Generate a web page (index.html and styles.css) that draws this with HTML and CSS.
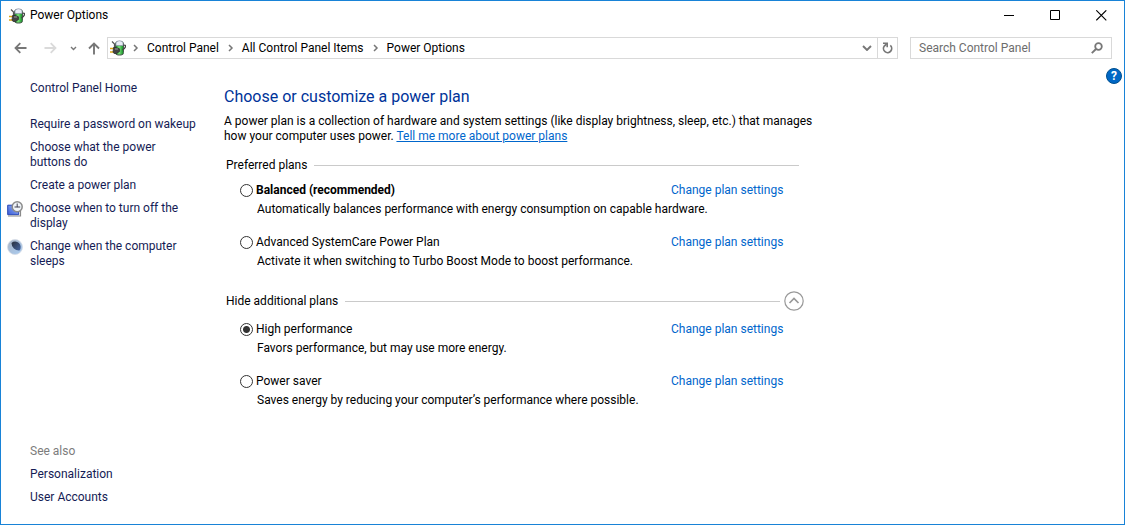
FILE: index.html
```html
<!DOCTYPE html>
<html lang="en">
<head>
<meta charset="utf-8">
<title>Power Options</title>
<meta name="viewport" content="width=device-width, initial-scale=1">
<link rel="stylesheet" href="styles.css">
</head>
<body>
<svg class="defs" aria-hidden="true">
  <defs>
    <linearGradient id="cell" x1="0" x2="1" y1="0" y2="0"><stop offset="0" stop-color="#0b7a1c"/><stop offset=".45" stop-color="#7ee07a"/><stop offset="1" stop-color="#0a8a20"/></linearGradient>
    <linearGradient id="screen" x1="0" x2="1" y1="1" y2="0"><stop offset="0" stop-color="#3a5cd8"/><stop offset="1" stop-color="#9db9f6"/></linearGradient>
    <linearGradient id="sky" x1="0" x2="1" y1="0" y2="1"><stop offset="0" stop-color="#a9b3c4"/><stop offset="1" stop-color="#a9cdf3"/></linearGradient>
    <linearGradient id="night" x1="0" x2="1" y1="0" y2="1"><stop offset="0" stop-color="#2a303c"/><stop offset="1" stop-color="#4667a5"/></linearGradient>
    <symbol id="power" viewBox="0 0 16 16">
      <path d="M2 1.500 4.500 4v4" fill="none" stroke="#555" stroke-width="1.200"/>
      <rect x="5.500" y="1.500" width="8" height="13.500" rx="2.500" fill="url(#cell)" stroke="#4c5a50"/>
      <path d="M6 5.500V3q0-2 3.500-2.300Q13 1 13 3v2.500z" fill="#e9edf6" stroke="#8a92a6" stroke-width=".7"/>
      <path d="M13.500 5.500q2.300-1 2 1t-3.200 3.500" fill="none" stroke="#444" stroke-width="1.300"/>
      <path d="M0 8.500h4M0 12h4" stroke="#d9a514" stroke-width="1.600"/>
      <path d="M3.500 7.500h2.500l3.500 1.300v2.700l-3 2H4L3 12z" fill="#444" stroke="#222" stroke-width=".6"/>
      <path d="M5 9h3" stroke="#999"/>
    </symbol>
    <symbol id="crumb" viewBox="0 0 6 8"><path d="M1 1l3 3-3 3" fill="none" stroke="#777" stroke-width="1.500"/></symbol>
  </defs>
</svg>
<div class="window">
  <header class="titlebar">
    <svg class="icon16"><use href="#power"/></svg>
    <h1 class="title">Power Options</h1>
    <div class="captions">
      <button class="caption" aria-label="Minimize"><svg viewBox="0 0 11 11"><path d="M0 5.500h10" stroke="#000"/></svg></button>
      <button class="caption" aria-label="Maximize"><svg viewBox="0 0 11 11"><path d="M.5.5h9v9h-9z" fill="none" stroke="#000"/></svg></button>
      <button class="caption" aria-label="Close"><svg viewBox="0 0 11 11"><path d="M.3.3l10 10M10.300.3l-10 10" stroke="#000" stroke-width="1.100"/></svg></button>
    </div>
  </header>
  <div class="toolbar">
    <div class="history">
      <button class="tool" aria-label="Back"><svg class="arrow" viewBox="0 0 13 12"><path d="M12.500 6H1.500M6.300 1.200 1.500 6l4.800 4.800" fill="none" stroke="#777" stroke-width="1.800"/></svg></button>
      <button class="tool" aria-label="Forward" disabled><svg class="arrow" viewBox="0 0 13 12"><path d="M.5 6h11M6.700 1.200 11.500 6l-4.800 4.800" fill="none" stroke="#dadada" stroke-width="1.800"/></svg></button>
      <button class="tool tool-small" aria-label="Recent locations"><svg class="tiny" viewBox="0 0 7 5"><path d="M1 1l2.500 2.500L6 1" fill="none" stroke="#777" stroke-width="1.400"/></svg></button>
      <button class="tool tool-up" aria-label="Up"><svg class="arrow-up" viewBox="0 0 12 13"><path d="M6 12.500V1.500M1 6.500l5-5 5 5" fill="none" stroke="#777" stroke-width="1.900"/></svg></button>
    </div>
    <nav class="address" aria-label="Address">
      <svg class="icon16"><use href="#power"/></svg>
      <ol class="crumbs">
        <li><svg class="crumb"><use href="#crumb"/></svg><a href="#">Control Panel</a></li>
        <li><svg class="crumb"><use href="#crumb"/></svg><a href="#">All Control Panel Items</a></li>
        <li><svg class="crumb"><use href="#crumb"/></svg><a href="#">Power Options</a></li>
      </ol>
      <button class="address-button" aria-label="Previous locations"><svg class="drop" viewBox="0 0 10 6"><path d="M1 1l4 4 4-4" fill="none" stroke="#777" stroke-width="1.900"/></svg></button>
      <button class="address-button refresh" aria-label="Refresh"><svg class="reload" viewBox="0 0 11 12"><path d="M8.300 3.400A4.100 4.100 0 1 1 2.300 4L4.600 2" fill="none" stroke="#777" stroke-width="1.700"/><path d="M1 1.300H5.200V5.300" fill="none" stroke="#777" stroke-width="1.600"/></svg></button>
    </nav>
    <form class="search">
      <input type="search" aria-label="Search Control Panel" placeholder="Search Control Panel">
      <button class="search-button" aria-label="Search" type="button"><svg viewBox="0 0 12 12"><circle cx="7.500" cy="4.500" r="3.300" fill="none" stroke="#777" stroke-width="1.800"/><path d="M5 7 .8 11.200" stroke="#777" stroke-width="1.900"/></svg></button>
    </form>
  </div>
  <div class="body">
    <aside class="sidebar">
      <a class="home" href="#">Control Panel Home</a>
      <ul class="tasks">
        <li><a href="#">Require a password on wakeup</a></li>
        <li><a href="#">Choose what the power buttons do</a></li>
        <li><a href="#">Create a power plan</a></li>
        <li>
          <svg class="icon16" viewBox="0 0 16 16"><path d="M.7 4.200h11v9.500H.7z" fill="url(#screen)" stroke="#2745b5"/><path d="M1 15h12.500V10" fill="none" stroke="#8a8a8a" stroke-width="1.200"/><circle cx="10.200" cy="5.800" r="5" fill="#f0f4f8" stroke="#8b8b8b" stroke-width="1.500"/><path d="M10.200 2.500v3.500h3M7.500 6h3" fill="none" stroke="#445"/></svg>
          <a href="#">Choose when to turn off the display</a>
        </li>
        <li>
          <svg class="icon16" viewBox="0 0 16 16"><circle cx="8" cy="8" r="7.500" fill="url(#sky)" stroke="#d5dce6" stroke-width=".8"/><path d="M4.500 4a5.500 5.500 0 0 1 8 7.500A7.500 7.500 0 0 1 4.500 4z" fill="url(#night)"/></svg>
          <a href="#">Change when the computer sleeps</a>
        </li>
      </ul>
      <section class="related">
        <h2>See also</h2>
        <a href="#">Personalization</a>
        <a href="#">User Accounts</a>
      </section>
    </aside>
    <main class="content">
      <h2 class="heading">Choose or customize a power plan</h2>
      <p class="intro">A power plan is a collection of hardware and system settings (like display brightness, sleep, etc.) that manages how your computer uses power. <a href="#">Tell me more about power plans</a></p>
      <section class="group">
        <h3 class="group-head">Preferred plans</h3>
        <div class="plan">
          <input type="radio" name="plan" id="balanced"><label for="balanced"><b>Balanced (recommended)</b></label>
          <a href="#">Change plan settings</a>
          <p>Automatically balances performance with energy consumption on capable hardware.</p>
        </div>
        <div class="plan">
          <input type="radio" name="plan" id="systemcare"><label for="systemcare">Advanced SystemCare Power Plan</label>
          <a href="#">Change plan settings</a>
          <p>Activate it when switching to Turbo Boost Mode to boost performance.</p>
        </div>
      </section>
      <section class="group group-extra">
        <div class="group-bar">
          <h3 class="group-head">Hide additional plans</h3>
          <button class="collapse" aria-label="Hide additional plans"><svg viewBox="0 0 20 20"><circle cx="10" cy="10" r="9.200" fill="none" stroke="#999" stroke-width="1.200"/><path d="M5.500 12 10 7.500l4.500 4.500" fill="none" stroke="#999" stroke-width="1.700"/></svg></button>
        </div>
        <div class="plan">
          <input type="radio" name="plan" id="high" checked><label for="high">High performance</label>
          <a href="#">Change plan settings</a>
          <p>Favors performance, but may use more energy.</p>
        </div>
        <div class="plan">
          <input type="radio" name="plan" id="saver"><label for="saver">Power saver</label>
          <a href="#">Change plan settings</a>
          <p>Saves energy by reducing your computer’s performance where possible.</p>
        </div>
      </section>
    </main>
    <button class="help" aria-label="Help">?</button>
  </div>
</div>
</body>
</html>
```
FILE: styles.css
```css
* { box-sizing: border-box; }
body {
  margin: 0;
  font: 12px/15px Roboto, "Open Sans", sans-serif;
  color: #000;
  background: #fff;
}
h1, h2, h3, p, ul, ol { margin: 0; padding: 0; font: inherit; }
ul, ol { list-style: none; }
a { color: inherit; text-decoration: none; }
button { margin: 0; padding: 0; border: 0; background: none; font: inherit; display: flex; align-items: center; justify-content: center; }
svg { display: block; flex: none; }
.defs { position: absolute; width: 0; height: 0; }
.icon16 { width: 16px; height: 16px; }

.window { display: flex; flex-direction: column; min-height: 100vh; border: 1px solid #1883d7; }

.titlebar { display: flex; align-items: center; height: 29px; padding-left: 8px; gap: 5px; }
.captions { display: flex; margin-left: auto; }
.caption { width: 46px; height: 29px; }
.caption svg { width: 11px; height: 11px; }

.toolbar { display: flex; align-items: center; height: 36px; padding: 0 12px 0 4px; }
.history { display: flex; width: 102px; }
.tool { width: 30px; height: 22px; }
.tool-small { width: 16px; }
.tool-up { width: 26px; }
.arrow { width: 13px; height: 12px; }
.arrow-up { width: 12px; height: 13px; }
.tiny { width: 7px; height: 5px; }
.address { display: flex; flex: 1; align-items: center; height: 22px; padding-left: 2px; border: 1px solid #d9d9d9; }
.crumbs { display: flex; flex: 1; gap: 2px; }
.crumbs li { display: flex; align-items: center; }
.crumb { width: 6px; height: 8px; margin: 0 8px 0 7px; }
.address-button { width: 20px; height: 20px; }
.refresh { border-left: 1px solid #d9d9d9; }
.drop { width: 10px; height: 6px; }
.reload { width: 11px; height: 12px; }
.search { display: flex; width: 202px; height: 22px; margin-left: 12px; border: 1px solid #d9d9d9; }
.search input { flex: 1; min-width: 0; padding: 0 0 0 8px; border: 0; outline: 0; background: none; font: inherit; appearance: none; }
.search input::placeholder { color: #6d6d6d; opacity: 1; }
.search-button { width: 28px; }
.search-button svg { width: 12px; height: 12px; }

.body { display: flex; flex: 1; align-items: stretch; padding-right: 2px; }
.sidebar { display: flex; flex-direction: column; flex: none; width: 223px; padding: 15px 27px 19px 29px; color: #151c55; }
.tasks { display: grid; gap: 8px; margin-top: 21px; }
.tasks li { display: flex; gap: 7px; }
.tasks .icon16 { margin-left: -23px; }
.related { display: grid; gap: 8px; margin-top: auto; padding-top: 24px; }
.related h2 { color: #7c7c7c; }

.content { flex: 0 1 592px; padding-top: 21px; }
.heading { font-size: 16px; line-height: 20px; color: #003399; }
.intro { margin-top: 7px; }
.intro a { color: #0066cc; text-decoration: underline; }
.group { margin: 14px 17px 0 2px; }
.group-extra { margin-top: 22px; margin-right: 12px; }
.group-head { display: flex; flex: 1; align-items: center; gap: 7px; }
.group-head::after { content: ""; flex: 1; height: 1px; background: #cacaca; }
.group-bar { display: flex; align-items: center; gap: 4px; }
.collapse, .collapse svg { width: 20px; height: 20px; }
.plan { display: grid; grid-template-columns: 13px 1fr 111px; column-gap: 3px; row-gap: 4px; align-items: center; margin: 18px 17px 0 14px; }
.group-extra .plan { margin-right: 22px; }
.group > .plan:nth-child(2) { margin-top: 10px; }
.group-extra > .plan:nth-child(2) { margin-top: 11px; }
.plan p { grid-column: 2 / -1; padding-left: 1px; }
.plan a { color: #0066cc; white-space: nowrap; }
.plan input { appearance: none; width: 13px; height: 13px; margin: 0; border: 1px solid #333; border-radius: 50%; background: #fff; }
.plan input:checked { background: radial-gradient(circle, #333 3px, #fff 4px); }

.help { flex: none; width: 16px; height: 16px; margin: 2px 0 0 auto; border-radius: 50%; border: 1px solid #00508f; background: #0067c5; color: #fff; font-weight: 700; }
```
